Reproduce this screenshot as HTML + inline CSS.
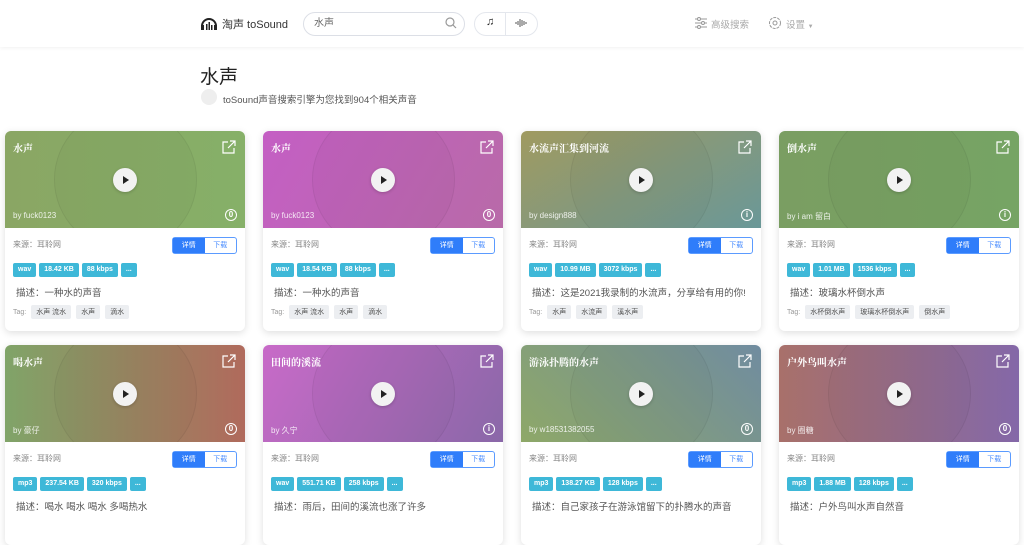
<!DOCTYPE html>
<html><head><meta charset="utf-8"><style>
*{box-sizing:border-box;margin:0;padding:0}
body{width:1024px;height:518px;overflow:hidden;background:#fff;font-family:"Liberation Sans","Noto Sans CJK SC",sans-serif;position:relative}
.hdr{position:absolute;left:0;top:0;width:1024px;height:47px;background:#fff;box-shadow:0 1px 4px rgba(0,0,0,.06)}
.abs{position:absolute}
.search{left:303px;top:12px;width:162px;height:24px;border:1px solid #dcdfe6;border-radius:12px;font-size:10px;color:#666;padding:4px 10px;line-height:14px}
.seg{left:474px;top:12px;width:64px;height:24px;border:1px solid #e4e7ed;border-radius:12px}
.card{position:absolute;width:240px;height:200px;background:#fff;border-radius:6px;box-shadow:0 2px 8px rgba(0,0,0,.13);overflow:hidden}
.img{position:absolute;left:0;top:0;width:240px;height:97px;overflow:hidden}
.ring{position:absolute;left:49px;top:-23px;width:143px;height:143px;border-radius:50%;background:rgba(0,0,0,.025);border:1px solid rgba(0,0,0,.06)}
.play{position:absolute;left:108px;top:37px;width:24px;height:24px;border-radius:50%;background:#f2f2f2;box-shadow:0 1px 3px rgba(0,0,0,.2)}
.play:after{content:"";position:absolute;left:10px;top:8px;border-left:6px solid #222;border-top:4px solid transparent;border-bottom:4px solid transparent}
.t{position:absolute;left:8px;top:9px;color:#fff;font-weight:bold;font-size:10px;font-family:"Noto Serif CJK SC",serif}
.by{position:absolute;left:8px;top:80px;color:rgba(255,255,255,.85);font-size:8px}
.ext{position:absolute;right:9px;top:9px;width:14px;height:14px}
.lic{position:absolute;right:8px;top:78px;width:12px;height:12px;border:1.5px solid #fff;border-radius:50%;color:#fff;font-size:8px;line-height:9px;text-align:center;font-weight:bold}
.src{position:absolute;left:8px;top:108px;font-size:8px;color:#888}
.btns{position:absolute;left:167px;top:106px;width:65px;height:17px;border:1px solid #5b9bff;border-radius:3px;font-size:7px;display:flex}
.btns span{flex:1;text-align:center;line-height:15px}
.b1{background:#2f7dfa;color:#fff}.b2{color:#4a8dff}
.chips{position:absolute;left:8px;top:132px;display:flex;gap:3px}
.chips span{background:#3eb8d8;color:#fff;font-size:7px;font-weight:bold;height:14px;line-height:14px;padding:0 5px;border-radius:2px}
.desc{position:absolute;left:11px;top:154px;font-size:9.5px;color:#555}
.tags{position:absolute;left:8px;top:174px;font-size:7px;color:#999;display:flex;gap:5px;align-items:center}
.tags span{background:#eceef1;color:#555;padding:2px 5px;border-radius:2px}
</style></head><body>
<div class="hdr">
 <svg class="abs" style="left:200px;top:15px" width="18" height="16" viewBox="0 0 18 16"><path d="M2 11 A7 7 0 0 1 16 11" fill="none" stroke="#222" stroke-width="2"/><rect x="1" y="10" width="3" height="5" fill="#222"/><rect x="14" y="10" width="3" height="5" fill="#222"/><rect x="6" y="9" width="1.5" height="6" fill="#222"/><rect x="8.5" y="7" width="1.5" height="8" fill="#222"/><rect x="11" y="10" width="1.5" height="5" fill="#222"/></svg>
 <div class="abs" style="left:222px;top:16px;font-size:11px;color:#333">淘声 toSound</div>
 <div class="abs search">水声</div>
 <svg class="abs" style="left:445px;top:17px" width="12" height="12" viewBox="0 0 12 12"><circle cx="5" cy="5" r="4" fill="none" stroke="#999" stroke-width="1.2"/><path d="M8 8l3 3" stroke="#999" stroke-width="1.2"/></svg>
 <div class="abs seg"></div>
 <div class="abs" style="left:505px;top:13px;width:1px;height:22px;background:#e4e7ed"></div>
 <div class="abs" style="left:486px;top:16px;font-size:11px;color:#222">♫</div>
 <svg class="abs" style="left:515px;top:18px" width="12" height="10"><path d="M1 4v2M3 3v4M5 1v8M7 2v6M9 3v4M11 4v2" stroke="#555" stroke-width="1"/></svg>
 <svg class="abs" style="left:695px;top:17px" width="12" height="12" viewBox="0 0 12 12" fill="none" stroke="#999"><path d="M0 2h12M0 6h12M0 10h12"/><circle cx="4" cy="2" r="1.5" fill="#fff"/><circle cx="8" cy="6" r="1.5" fill="#fff"/><circle cx="4" cy="10" r="1.5" fill="#fff"/></svg>
 <div class="abs" style="left:711px;top:17px;font-size:9.5px;color:#aaa">高级搜索</div>
 <svg class="abs" style="left:768px;top:16px" width="14" height="14" viewBox="0 0 14 14" fill="none" stroke="#999"><circle cx="7" cy="7" r="5.5" stroke-dasharray="3 1"/><circle cx="7" cy="7" r="2"/></svg>
 <div class="abs" style="left:786px;top:17px;font-size:9.5px;color:#aaa">设置 <span style="font-size:6px">▼</span></div>
</div>
<div class="abs" style="left:200px;top:62px;font-size:19px;color:#222">水声</div>
<div class="abs" style="left:201px;top:89px;width:16px;height:16px;border-radius:50%;background:#eee"></div>
<div class="abs" style="left:223px;top:92px;font-size:9.5px;color:#555">toSound声音搜索引擎为您找到904个相关声音</div>

<div class="card" style="left:5px;top:131px"><div class="img" style="background:linear-gradient(90deg,#8aa664,#86b068)"><div class="ring"></div><div class="play"></div><div class="t">水声</div><div class="by">by fuck0123</div><svg class="ext" viewBox="0 0 14 14" fill="none" stroke="#fff" stroke-width="1.2"><path d="M6 2H1v11h11V8M8 1h5v5M13 1L6 8"/></svg><div class="lic">0</div></div>
<div class="src">来源：耳聆网</div><div class="btns"><span class="b1">详情</span><span class="b2">下载</span></div>
<div class="chips"><span>wav</span><span>18.42 KB</span><span>88 kbps</span><span>...</span></div>
<div class="desc">描述：一种水的声音</div><div class="tags">Tag: <span>水声 流水</span><span>水声</span><span>滴水</span></div></div>

<div class="card" style="left:263px;top:131px"><div class="img" style="background:linear-gradient(120deg,#c45fc4,#b86aa8)"><div class="ring"></div><div class="play"></div><div class="t">水声</div><div class="by">by fuck0123</div><svg class="ext" viewBox="0 0 14 14" fill="none" stroke="#fff" stroke-width="1.2"><path d="M6 2H1v11h11V8M8 1h5v5M13 1L6 8"/></svg><div class="lic">0</div></div>
<div class="src">来源：耳聆网</div><div class="btns"><span class="b1">详情</span><span class="b2">下载</span></div>
<div class="chips"><span>wav</span><span>18.54 KB</span><span>88 kbps</span><span>...</span></div>
<div class="desc">描述：一种水的声音</div><div class="tags">Tag: <span>水声 流水</span><span>水声</span><span>滴水</span></div></div>

<div class="card" style="left:521px;top:131px"><div class="img" style="background:linear-gradient(150deg,#a09a60,#6a9898)"><div class="ring"></div><div class="play"></div><div class="t">水流声汇集到河流</div><div class="by">by design888</div><svg class="ext" viewBox="0 0 14 14" fill="none" stroke="#fff" stroke-width="1.2"><path d="M6 2H1v11h11V8M8 1h5v5M13 1L6 8"/></svg><div class="lic">i</div></div>
<div class="src">来源：耳聆网</div><div class="btns"><span class="b1">详情</span><span class="b2">下载</span></div>
<div class="chips"><span>wav</span><span>10.99 MB</span><span>3072 kbps</span><span>...</span></div>
<div class="desc">描述：这是2021我录制的水流声，分享给有用的你!</div><div class="tags">Tag: <span>水声</span><span>水流声</span><span>溪水声</span></div></div>

<div class="card" style="left:779px;top:131px"><div class="img" style="background:linear-gradient(90deg,#7a9e62,#76a464)"><div class="ring"></div><div class="play"></div><div class="t">倒水声</div><div class="by">by i am 留白</div><svg class="ext" viewBox="0 0 14 14" fill="none" stroke="#fff" stroke-width="1.2"><path d="M6 2H1v11h11V8M8 1h5v5M13 1L6 8"/></svg><div class="lic">i</div></div>
<div class="src">来源：耳聆网</div><div class="btns"><span class="b1">详情</span><span class="b2">下载</span></div>
<div class="chips"><span>wav</span><span>1.01 MB</span><span>1536 kbps</span><span>...</span></div>
<div class="desc">描述：玻璃水杯倒水声</div><div class="tags">Tag: <span>水杯倒水声</span><span>玻璃水杯倒水声</span><span>倒水声</span></div></div>

<div class="card" style="left:5px;top:345px"><div class="img" style="background:linear-gradient(90deg,#80a468,#b06a5c)"><div class="ring"></div><div class="play"></div><div class="t">喝水声</div><div class="by">by 豪仔</div><svg class="ext" viewBox="0 0 14 14" fill="none" stroke="#fff" stroke-width="1.2"><path d="M6 2H1v11h11V8M8 1h5v5M13 1L6 8"/></svg><div class="lic">0</div></div>
<div class="src">来源：耳聆网</div><div class="btns"><span class="b1">详情</span><span class="b2">下载</span></div>
<div class="chips"><span>mp3</span><span>237.54 KB</span><span>320 kbps</span><span>...</span></div>
<div class="desc">描述：喝水 喝水 喝水 多喝热水</div></div>

<div class="card" style="left:263px;top:345px"><div class="img" style="background:linear-gradient(120deg,#c86ac8,#8a68a8)"><div class="ring"></div><div class="play"></div><div class="t">田间的溪流</div><div class="by">by 久宁</div><svg class="ext" viewBox="0 0 14 14" fill="none" stroke="#fff" stroke-width="1.2"><path d="M6 2H1v11h11V8M8 1h5v5M13 1L6 8"/></svg><div class="lic">i</div></div>
<div class="src">来源：耳聆网</div><div class="btns"><span class="b1">详情</span><span class="b2">下载</span></div>
<div class="chips"><span>wav</span><span>551.71 KB</span><span>258 kbps</span><span>...</span></div>
<div class="desc">描述：雨后，田间的溪流也涨了许多</div></div>

<div class="card" style="left:521px;top:345px"><div class="img" style="background:linear-gradient(45deg,#8ea868,#708ca0)"><div class="ring"></div><div class="play"></div><div class="t">游泳扑腾的水声</div><div class="by">by w18531382055</div><svg class="ext" viewBox="0 0 14 14" fill="none" stroke="#fff" stroke-width="1.2"><path d="M6 2H1v11h11V8M8 1h5v5M13 1L6 8"/></svg><div class="lic">0</div></div>
<div class="src">来源：耳聆网</div><div class="btns"><span class="b1">详情</span><span class="b2">下载</span></div>
<div class="chips"><span>mp3</span><span>138.27 KB</span><span>128 kbps</span><span>...</span></div>
<div class="desc">描述：自己家孩子在游泳馆留下的扑腾水的声音</div></div>

<div class="card" style="left:779px;top:345px"><div class="img" style="background:linear-gradient(90deg,#a8706a,#8468a8)"><div class="ring"></div><div class="play"></div><div class="t">户外鸟叫水声</div><div class="by">by 圈糖</div><svg class="ext" viewBox="0 0 14 14" fill="none" stroke="#fff" stroke-width="1.2"><path d="M6 2H1v11h11V8M8 1h5v5M13 1L6 8"/></svg><div class="lic">0</div></div>
<div class="src">来源：耳聆网</div><div class="btns"><span class="b1">详情</span><span class="b2">下载</span></div>
<div class="chips"><span>mp3</span><span>1.88 MB</span><span>128 kbps</span><span>...</span></div>
<div class="desc">描述：户外鸟叫水声自然音</div></div>
</body></html>
